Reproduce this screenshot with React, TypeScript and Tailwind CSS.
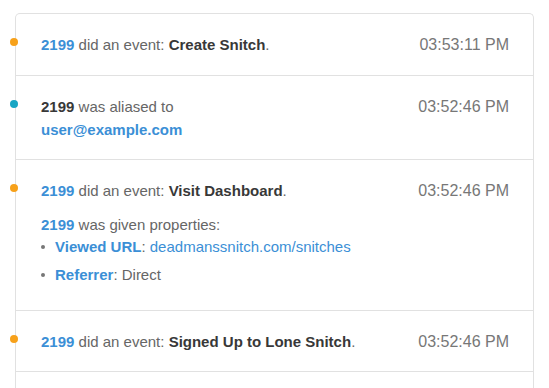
import React from "react";

const rowCls =
  "relative flex items-start justify-between border-b border-[#e1e1e1] pt-[19px] pb-[18px] pl-[25px] pr-[24px]";

export default function App() {
  return (
    <div className="min-h-[388px] bg-white pl-[15px] pr-[15px] pt-[13px] font-['Liberation_Sans',Arial,sans-serif] text-[15px] leading-[23px] text-[#666]">
      <div className="rounded-t-[5px] border border-b-0 border-[#e1e1e1]">
        {/* Row 1 */}
        <div className="relative flex items-start justify-between border-b border-[#e1e1e1] pt-[19px] pb-[19px] pl-[25px] pr-[24px]">
          <span className="absolute left-[-6px] top-[24px] h-[8px] w-[8px] rounded-full bg-[#f7a11a]" />
          <div>
            <span className="font-bold text-[#3b8fd6]">2199</span> did an event:{" "}
            <span className="font-bold text-[#383838]">Create Snitch</span>.
          </div>
          <div className="text-[16px] text-[#777]">03:53:11 PM</div>
        </div>
        {/* Row 2 */}
        <div className={rowCls}>
          <span className="absolute left-[-6px] top-[24px] h-[8px] w-[8px] rounded-full bg-[#18a6c4]" />
          <div>
            <div>
              <span className="font-bold text-[#383838]">2199</span> was aliased to
            </div>
            <div className="font-bold text-[#3b8fd6]">user@example.com</div>
          </div>
          <div className="text-[16px] text-[#777]">03:52:46 PM</div>
        </div>
        {/* Row 3 */}
        <div className={rowCls}>
          <span className="absolute left-[-6px] top-[24px] h-[8px] w-[8px] rounded-full bg-[#f7a11a]" />
          <div>
            <div>
              <span className="font-bold text-[#3b8fd6]">2199</span> did an event:{" "}
              <span className="font-bold text-[#383838]">Visit Dashboard</span>.
            </div>
            <div className="mt-[11px]">
              <span className="font-bold text-[#3b8fd6]">2199</span> was given properties:
            </div>
            <ul className="leading-[21px]">
              <li className="mb-[7px] flex items-center">
                <span className="mr-[10px] h-[4px] w-[4px] rounded-full bg-[#777]" />
                <span>
                  <span className="font-bold text-[#3b8fd6]">Viewed URL</span>:{" "}
                  <span className="text-[#3b8fd6]">deadmanssnitch.com/snitches</span>
                </span>
              </li>
              <li className="mb-[7px] flex items-center">
                <span className="mr-[10px] h-[4px] w-[4px] rounded-full bg-[#777]" />
                <span>
                  <span className="font-bold text-[#3b8fd6]">Referrer</span>: Direct
                </span>
              </li>
            </ul>
          </div>
          <div className="text-[16px] text-[#777]">03:52:46 PM</div>
        </div>
        {/* Row 4 */}
        <div className={rowCls}>
          <span className="absolute left-[-6px] top-[24px] h-[8px] w-[8px] rounded-full bg-[#f7a11a]" />
          <div>
            <span className="font-bold text-[#3b8fd6]">2199</span> did an event:{" "}
            <span className="font-bold text-[#383838]">Signed Up to Lone Snitch</span>.
          </div>
          <div className="text-[16px] text-[#777]">03:52:46 PM</div>
        </div>
        <div className="h-[40px]" />
      </div>
    </div>
  );
}
